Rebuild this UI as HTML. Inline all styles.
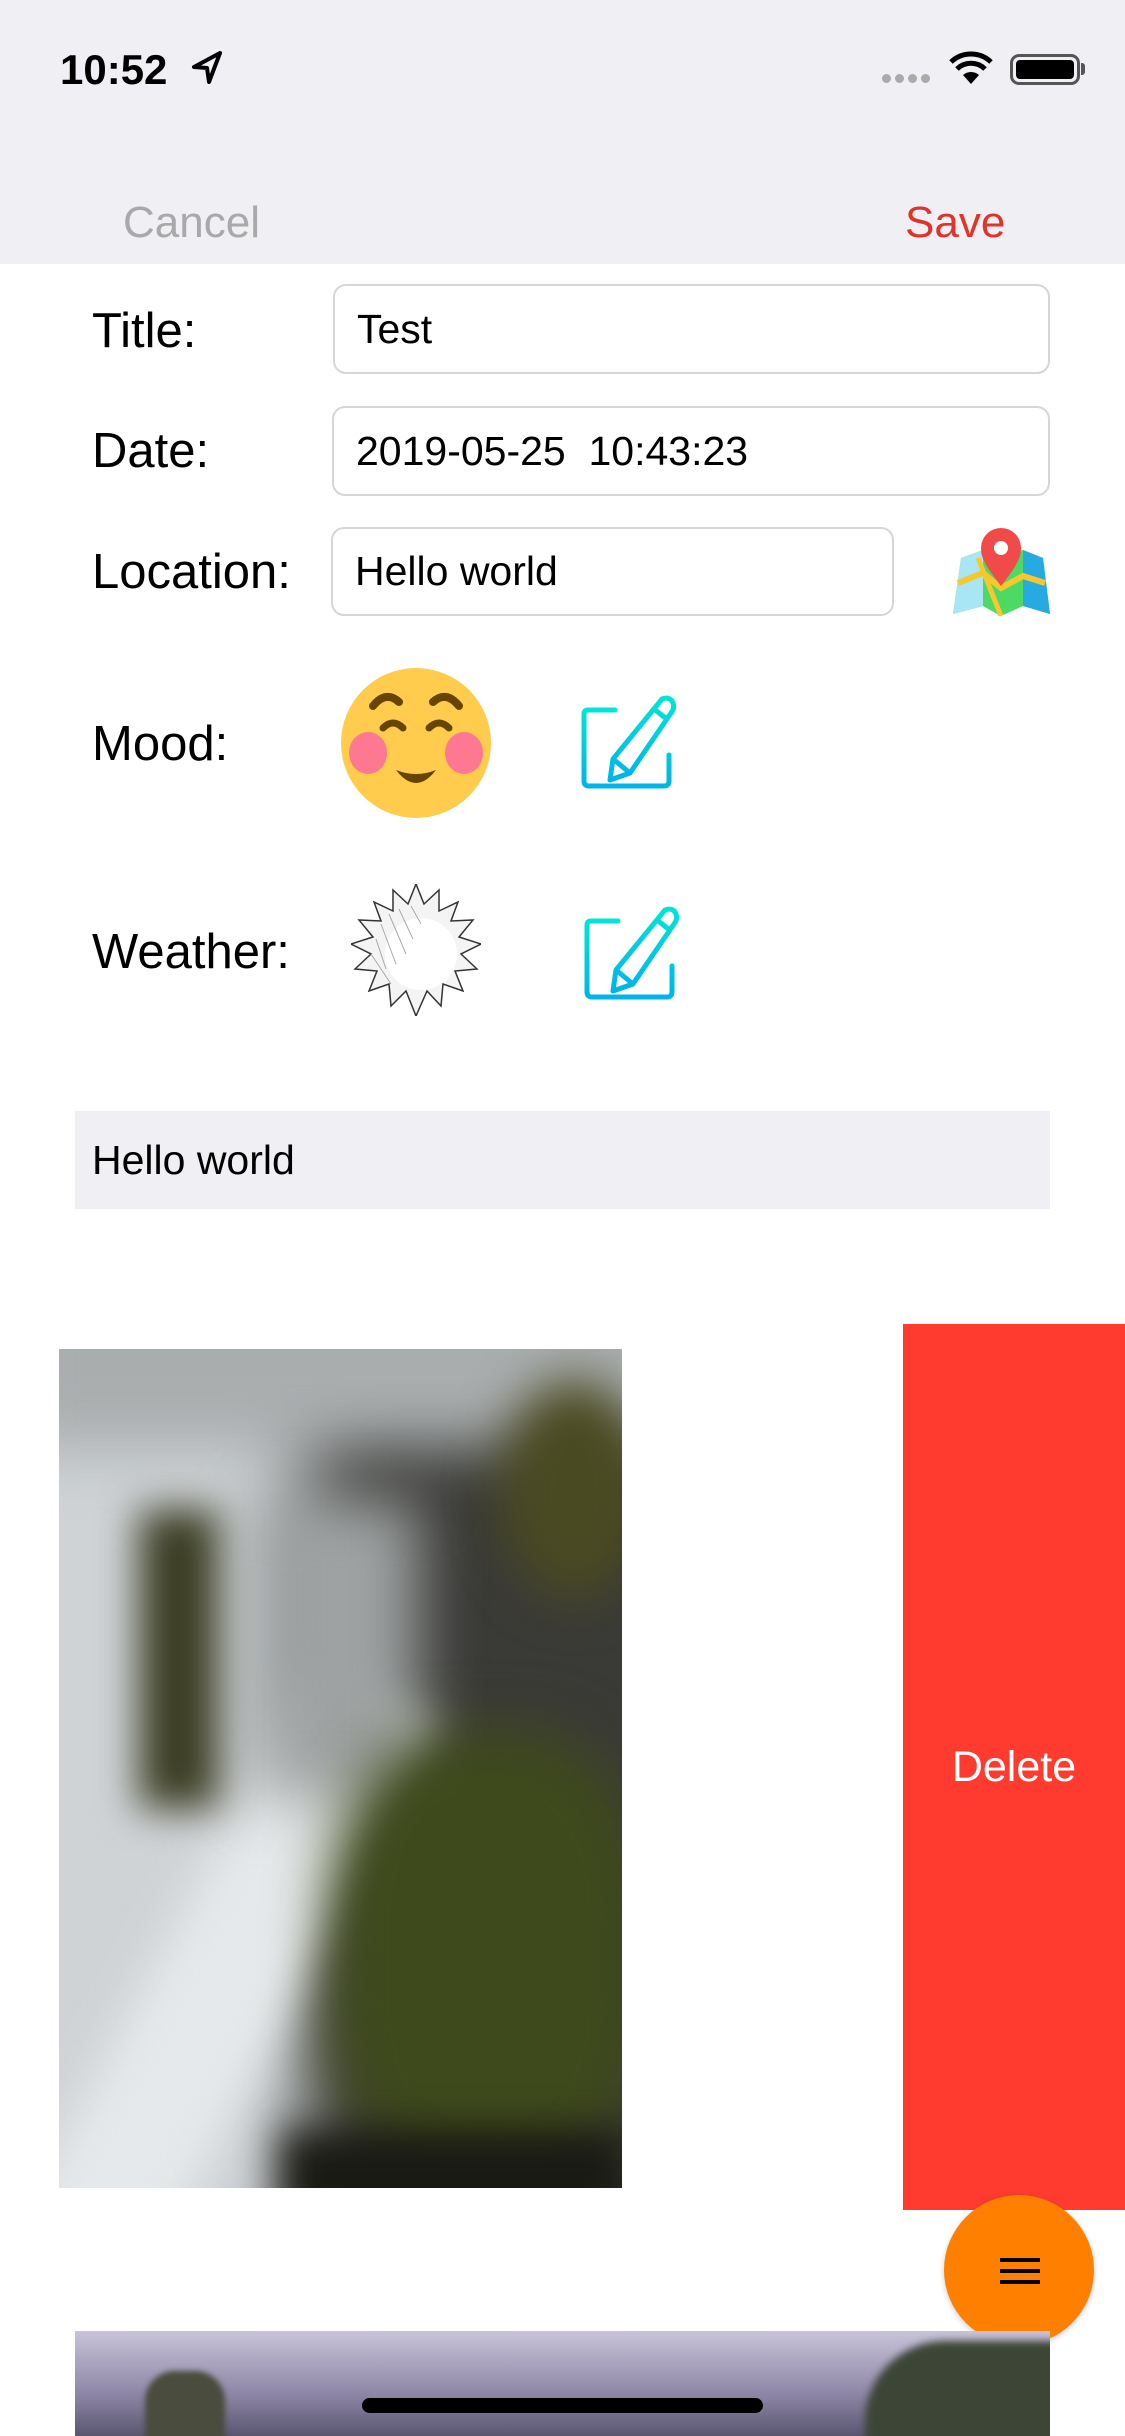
<!DOCTYPE html>
<html><head><meta charset="utf-8"><style>
*{margin:0;padding:0;box-sizing:border-box}
body{width:1125px;height:2436px;overflow:hidden;background:#fff;font-family:"Liberation Sans",sans-serif;position:relative}
.abs{position:absolute}
.lbl{position:absolute;left:92px;font-size:49px;color:#000;line-height:1}
.field{position:absolute;border:2px solid #d6d6d6;border-radius:13px;font-size:41px;padding-left:22px;display:flex;align-items:center;color:#000}
</style></head><body>
<div class="abs" style="left:0;top:0;width:1125px;height:264px;background:#efeff4"></div>
<div class="abs" style="left:60px;top:46px;font-size:42px;font-weight:bold;">10:52</div>
<svg class="abs" style="left:190px;top:50px" width="34" height="36" viewBox="0 0 34 36"><path d="M30 3 L4 17 L17 18 L19 32 Z" fill="none" stroke="#000" stroke-width="4" stroke-linejoin="round"/></svg>
<div class="abs" style="left:882px;top:74px;display:flex;gap:4px"><i style="width:9px;height:9px;border-radius:5px;background:#aaa;display:block"></i><i style="width:9px;height:9px;border-radius:5px;background:#aaa;display:block"></i><i style="width:9px;height:9px;border-radius:5px;background:#aaa;display:block"></i><i style="width:9px;height:9px;border-radius:5px;background:#aaa;display:block"></i></div>
<svg class="abs" style="left:948px;top:50px" width="46" height="36" viewBox="0 0 46 36"><path d="M23 34 L15 25 A12 12 0 0 1 31 25 Z" fill="#000"/><path d="M9 19 A20 20 0 0 1 37 19" stroke="#000" stroke-width="5" fill="none"/><path d="M3 12 A29 29 0 0 1 43 12" stroke="#000" stroke-width="5" fill="none"/></svg>
<div class="abs" style="left:1010px;top:54px;width:70px;height:31px;border:3px solid #555;border-radius:9px;padding:3px"><div style="width:100%;height:100%;background:#000;border-radius:4px"></div></div>
<div class="abs" style="left:1081px;top:63px;width:4px;height:12px;background:#555;border-radius:0 3px 3px 0"></div>
<div class="abs" style="left:123px;top:198px;font-size:44px;color:#a9a9a9">Cancel</div>
<div class="abs" style="left:905px;top:198px;font-size:44px;color:#e0332a">Save</div>

<div class="lbl" style="top:307px">Title:</div>
<div class="field" style="left:333px;top:284px;width:717px;height:90px">Test</div>
<div class="lbl" style="top:427px">Date:</div>
<div class="field" style="left:332px;top:406px;width:718px;height:90px">2019-05-25&nbsp; 10:43:23</div>
<div class="lbl" style="top:548px">Location:</div>
<div class="field" style="left:331px;top:527px;width:563px;height:89px">Hello world</div>
<svg class="abs" style="left:953px;top:528px" width="97" height="88" viewBox="0 0 97 88">
<path d="M0 86 L8 30 L30 22 L48 30 L70 22 L90 30 L97 86 L70 78 L48 88 L30 78 Z" fill="#4cd964"/>
<path d="M0 86 L8 30 L30 22 L30 78 Z" fill="#a8e6f5"/>
<path d="M70 22 L90 30 L97 86 L70 78 Z" fill="#27a9e1"/>
<path d="M5 55 L30 45 L48 60 L70 48 L92 55" stroke="#f7c82d" stroke-width="6" fill="none"/>
<path d="M25 30 L48 88" stroke="#f7c82d" stroke-width="5" fill="none"/>
<path d="M48 58 C30 35 28 28 28 20 A20 20 0 0 1 68 20 C68 28 66 35 48 58 Z" fill="#f04a4a"/>
<circle cx="48" cy="20" r="7" fill="#fff"/></svg>

<div class="lbl" style="top:720px">Mood:</div>
<svg class="abs" style="left:341px;top:668px" width="150" height="150" viewBox="0 0 150 150">
<circle cx="75" cy="75" r="75" fill="#ffcc4d"/>
<ellipse cx="27" cy="85" rx="19" ry="21" fill="#ff7892"/><ellipse cx="123" cy="85" rx="19" ry="21" fill="#ff7892"/>
<path d="M32 38 Q45 22 58 34" stroke="#664500" stroke-width="8" fill="none" stroke-linecap="round"/>
<path d="M92 34 Q105 22 118 38" stroke="#664500" stroke-width="8" fill="none" stroke-linecap="round"/>
<path d="M42 60 Q52 50 62 60" stroke="#664500" stroke-width="7" fill="none" stroke-linecap="round"/>
<path d="M88 60 Q98 50 108 60" stroke="#664500" stroke-width="7" fill="none" stroke-linecap="round"/>
<path d="M55 102 Q75 128 95 102 Q75 110 55 102Z" fill="#664500"/></svg>
<svg class="abs" style="left:580px;top:693px" width="98" height="97" viewBox="0 0 98 97">
<defs><linearGradient id="g" x1="0" y1="0" x2="0" y2="1"><stop offset="0" stop-color="#00e5d4"/><stop offset="1" stop-color="#00b4ea"/></linearGradient></defs>
<path d="M35 17 H8 Q4 17 4 21 V88 Q4 93 9 93 H84 Q89 93 89 88 V62" stroke="url(#g)" stroke-width="5" fill="none" stroke-linecap="round"/>
<path d="M82 6 Q90 3 93 10 Q95 15 91 20 L50 80 L30 87 L33 66 Z M33 66 L50 80 M74 16 L88 27" stroke="url(#g)" stroke-width="5" fill="none" stroke-linejoin="round"/></svg>

<div class="lbl" style="top:928px">Weather:</div>
<svg class="abs" style="left:351px;top:884px" width="130" height="132" viewBox="0 0 130 132">
<polygon points="65,0 73,20 88,6 88,27 107,18 100,37 122,36 108,53 130,60 110,70 126,85 104,87 112,107 92,100 90,122 76,107 65,132 55,107 40,122 38,100 18,107 26,87 4,85 20,70 0,60 22,53 8,36 30,37 23,18 42,27 42,6 57,20" fill="#f4f4f4" stroke="#333" stroke-width="1.5"/>
<circle cx="70" cy="70" r="36" fill="#fff"/>
<path d="M30 40 L45 80 M38 30 L55 70 M48 25 L62 55 M25 55 L35 85 M60 22 L70 40 M20 70 L40 100" stroke="#aaa" stroke-width="1"/></svg>
<svg class="abs" style="left:583px;top:904px" width="98" height="97" viewBox="0 0 98 97">
<path d="M35 17 H8 Q4 17 4 21 V88 Q4 93 9 93 H84 Q89 93 89 88 V62" stroke="url(#g)" stroke-width="5" fill="none" stroke-linecap="round"/>
<path d="M82 6 Q90 3 93 10 Q95 15 91 20 L50 80 L30 87 L33 66 Z M33 66 L50 80 M74 16 L88 27" stroke="url(#g)" stroke-width="5" fill="none" stroke-linejoin="round"/></svg>

<div class="abs" style="left:75px;top:1111px;width:975px;height:98px;background:#efeff4;font-size:41px;padding-left:17px;display:flex;align-items:center">Hello world</div>

<div class="abs" style="left:59px;top:1349px;width:563px;height:839px;overflow:hidden;background:#3a3a37">
<div class="abs" style="left:-100px;top:-100px;width:350px;height:1100px;background:#cfd3d6;filter:blur(40px)"></div>
<div class="abs" style="left:-50px;top:-80px;width:700px;height:180px;background:#a9adae;filter:blur(30px)"></div>
<div class="abs" style="left:60px;top:300px;width:140px;height:800px;background:#e6e9eb;transform:rotate(28deg);filter:blur(22px)"></div>
<div class="abs" style="left:200px;top:150px;width:160px;height:300px;background:#9ea2a2;filter:blur(30px)"></div>
<div class="abs" style="left:270px;top:380px;width:320px;height:460px;background:#3f4a1c;border-radius:40%;filter:blur(30px)"></div>
<div class="abs" style="left:440px;top:30px;width:150px;height:220px;background:#4a4a22;border-radius:50%;filter:blur(25px)"></div>
<div class="abs" style="left:80px;top:160px;width:80px;height:300px;background:#3a3c22;filter:blur(20px)"></div>
<div class="abs" style="left:220px;top:780px;width:350px;height:100px;background:#1a1a14;filter:blur(20px)"></div>
</div>

<div class="abs" style="left:903px;top:1324px;width:222px;height:886px;background:#ff3b30;color:#fff;font-size:43px;display:flex;align-items:center;justify-content:center">Delete</div>

<div class="abs" style="left:944px;top:2195px;width:150px;height:150px;border-radius:50%;background:#ff7f00;box-shadow:0 2px 6px rgba(0,0,0,.2)"></div>
<div class="abs" style="left:1000px;top:2258px;width:40px;height:4px;background:#000;box-shadow:0 11px 0 #000,0 22px 0 #000"></div>

<div class="abs" style="left:75px;top:2331px;width:975px;height:105px;overflow:hidden;background:linear-gradient(180deg,#c9c3d9 0%,#8e86a6 60%,#5a5670 100%)">
<div class="abs" style="left:70px;top:40px;width:80px;height:75px;background:#4a4c3e;border-radius:30px 30px 0 0;filter:blur(3px)"></div>
<div class="abs" style="left:790px;top:10px;width:200px;height:105px;background:#3d4636;border-radius:80px 0 0 0;filter:blur(4px)"></div>
</div>
<div class="abs" style="left:362px;top:2398px;width:401px;height:15px;border-radius:8px;background:#000"></div>
</body></html>
